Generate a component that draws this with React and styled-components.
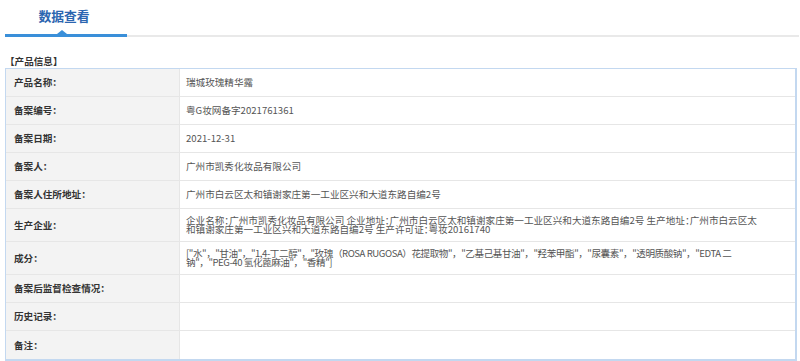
import React from "react";
import styled, { createGlobalStyle } from "styled-components";

const Global = createGlobalStyle`
  html, body { margin: 0; padding: 0; background: #fff; }
  body {
    font-family: "Noto Sans CJK SC", "Noto Sans", sans-serif;
  }
`;

const Page = styled.div`
  padding: 0 1px 0 5px;
`;

const TabBar = styled.div`
  display: flex;
  border-bottom: 2px solid #e9e9e9;
  height: 35px;
`;

const Tab = styled.div`
  position: relative;
  width: 122px;
  box-sizing: border-box;
  padding: 9px 4px 0 0;
  text-align: center;
  font-size: 12.8px;
  line-height: 13px;
  font-weight: 700;
  color: #2c66b0;
  border-bottom: 3px solid #3a8fd9;
  margin-bottom: -2px;
`;

const Caret = styled.span`
  position: absolute;
  left: 52px;
  bottom: 0;
  width: 0;
  height: 0;
  border-left: 5px solid transparent;
  border-right: 5px solid transparent;
  border-bottom: 4px solid #3a8fd9;
`;

const SectionTitle = styled.div`
  margin: 19px 0 2px 0;
  font-size: 9.6px;
  line-height: 10px;
  font-weight: 700;
  color: #333;
`;

const Table = styled.div`
  display: grid;
  grid-template-columns: 174px 1fr;
  border: 1px solid #c3d8f0;
  border-right-width: 2px;
  border-bottom-width: 2px;
  width: 792px;
  box-sizing: border-box;
`;

const Cell = styled.div`
  min-height: 28px;
  box-sizing: border-box;
  display: flex;
  align-items: center;
  padding: 7px ${(p) => (p.$label ? "8px" : "34px")} 7px ${(p) => (p.$label ? "8px" : "6px")};
  font-size: 9.6px;
  line-height: 9px;
  font-feature-settings: ${(p) => (p.$fullPunct ? "normal" : '"halt" 1')};
  letter-spacing: ${(p) => (p.$fullPunct ? "-0.45px" : "normal")};
  border-bottom: ${(p) => (p.$last ? "none" : "1px solid #e6e6e6")};
  background: ${(p) => (p.$label ? "#f3f3f3" : "#fff")};
  border-right: ${(p) => (p.$label ? "1px solid #e6e6e6" : "none")};
  color: ${(p) => (p.$label ? "#333" : "#555")};
  font-weight: ${(p) => (p.$label ? 700 : 400)};
  word-break: break-all;
`;

const rows = [
  ["产品名称：", "瑞城玫瑰精华露"],
  ["备案编号：", "粤G妆网备字2021761361"],
  ["备案日期：", "2021-12-31"],
  ["备案人：", "广州市凯秀化妆品有限公司"],
  ["备案人住所地址：", "广州市白云区太和镇谢家庄第一工业区兴和大道东路自编2号"],
  [
    "生产企业：",
    "企业名称：广州市凯秀化妆品有限公司 企业地址：广州市白云区太和镇谢家庄第一工业区兴和大道东路自编2号 生产地址：广州市白云区太和镇谢家庄第一工业区兴和大道东路自编2号 生产许可证：粤妆20161740",
  ],
  [
    "成分：",
    "[\"水\"，\"甘油\"，\"1,4-丁二醇\"，\"玫瑰（ROSA RUGOSA）花提取物\"，\"乙基己基甘油\"，\"羟苯甲酯\"，\"尿囊素\"，\"透明质酸钠\"，\"EDTA 二钠\"，\"PEG-40 氢化蓖麻油\"，\"香精\"]",
    true,
  ],
  ["备案后监督检查情况：", ""],
  ["历史记录：", ""],
  ["备注：", ""],
];

export default function App() {
  return (
    <Page>
      <Global />
      <TabBar>
        <Tab>
          数据查看
          <Caret />
        </Tab>
      </TabBar>
      <SectionTitle>【产品信息】</SectionTitle>
      <Table>
        {rows.map(([k, v, full], i) => (
          <React.Fragment key={k}>
            <Cell $label $last={i === rows.length - 1}>{k}</Cell>
            <Cell $fullPunct={full} $last={i === rows.length - 1}>{v}</Cell>
          </React.Fragment>
        ))}
      </Table>
    </Page>
  );
}
